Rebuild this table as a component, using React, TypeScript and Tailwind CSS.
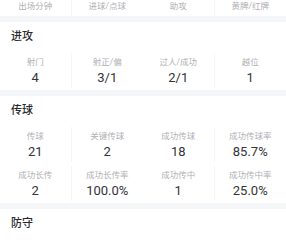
const FONT = "font-['Roboto','Noto_Sans_CJK_SC',sans-serif]";

type Stat = { label: string; value?: string };

function StatCell({ stat, index }: { stat: Stat; index: number }) {
  // faint dividers appear only after the 1st and 3rd column
  const divider = index % 4 === 0 || index % 4 === 2 ? "border-r border-[#f6f6f7]" : "";
  return (
    <div className={`flex flex-col items-center pt-[3px] ${divider}`}>
      <div className="text-[8.5px] leading-[12px] text-[#b0b0b4]">{stat.label}</div>
      {stat.value !== undefined && (
        <div className="text-[13px] leading-[20px] text-[#333338]">{stat.value}</div>
      )}
    </div>
  );
}

function Section({ title, stats }: { title: string; stats: Stat[] }) {
  return (
    <div>
      <div className="h-[31px] flex items-center pl-[11px] text-[11px] font-medium text-[#2a2a2e]">
        {title}
      </div>
      <div className="grid grid-cols-4 gap-y-[4px] pb-[2px]">
        {stats.map((s, i) => (
          <StatCell key={s.label} stat={s} index={i} />
        ))}
      </div>
    </div>
  );
}

const Band = () => <div className="h-[6px] bg-[#f5f6f8]" />;

export default function App() {
  const top: Stat[] = [
    { label: "出场分钟" },
    { label: "进球/点球" },
    { label: "助攻" },
    { label: "黄牌/红牌" },
  ];

  const attack: Stat[] = [
    { label: "射门", value: "4" },
    { label: "射正/偏", value: "3/1" },
    { label: "过人/成功", value: "2/1" },
    { label: "越位", value: "1" },
  ];

  const passing: Stat[] = [
    { label: "传球", value: "21" },
    { label: "关键传球", value: "2" },
    { label: "成功传球", value: "18" },
    { label: "成功传球率", value: "85.7%" },
    { label: "成功长传", value: "2" },
    { label: "成功长传率", value: "100.0%" },
    { label: "成功传中", value: "1" },
    { label: "成功传中率", value: "25.0%" },
  ];

  return (
    <div className={`w-[286px] h-[242px] overflow-hidden bg-white ${FONT}`}>
      <div className="grid grid-cols-4 h-[16px]">
        {top.map((s, i) => (
          <div
            key={s.label}
            className={`flex justify-center ${i === 0 || i === 2 ? "border-r border-[#f6f6f7]" : ""}`}
          >
            <div className="text-[8.5px] leading-[12px] text-[#b0b0b4]">{s.label}</div>
          </div>
        ))}
      </div>
      <Band />
      <Section title="进攻" stats={attack} />
      <Band />
      <Section title="传球" stats={passing} />
      <Band />
      <Section title="防守" stats={[]} />
    </div>
  );
}
